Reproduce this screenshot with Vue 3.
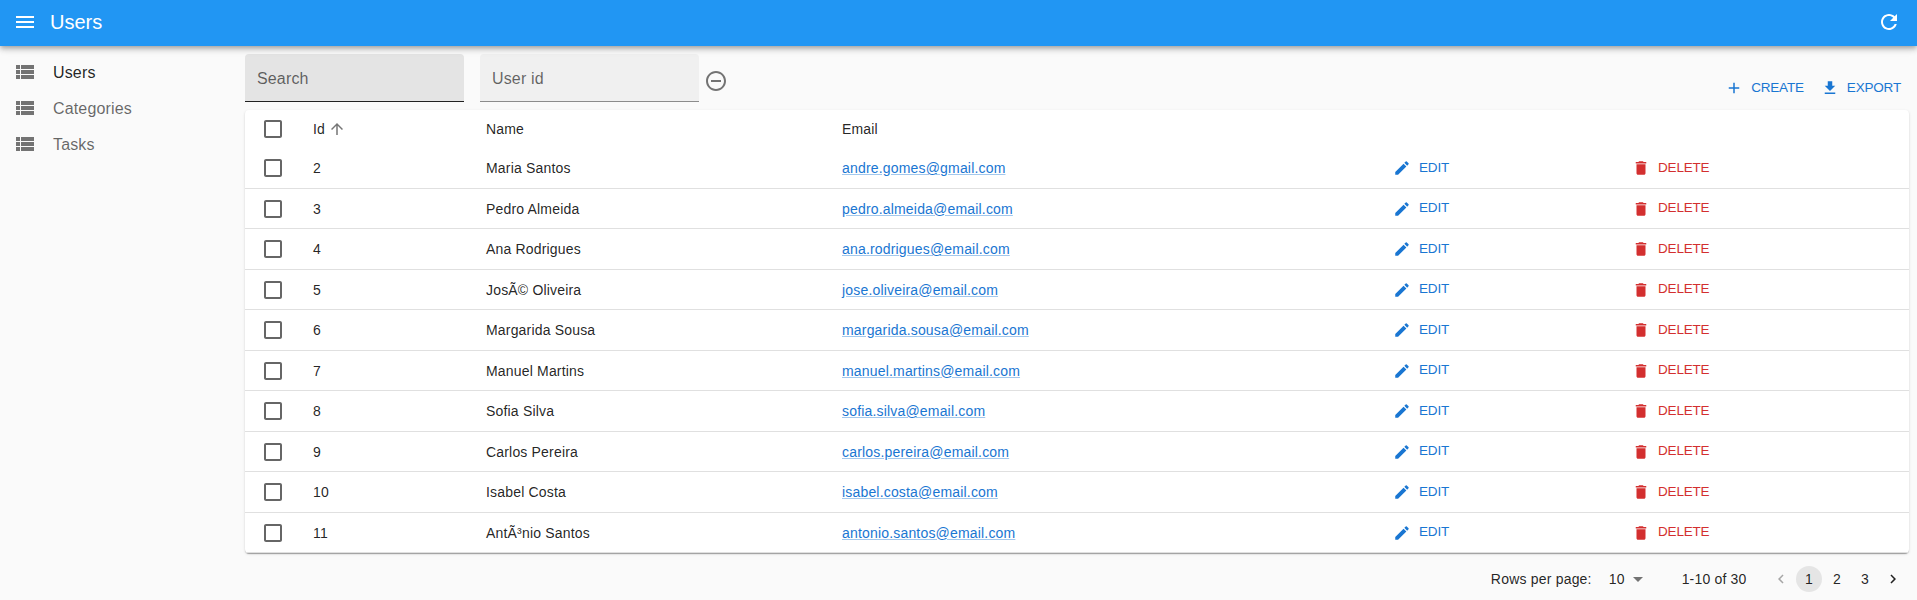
<script setup>
const menu = ['Users', 'Categories', 'Tasks']
const users = [
  { id: 2, name: 'Maria Santos', email: 'andre.gomes@gmail.com' },
  { id: 3, name: 'Pedro Almeida', email: 'pedro.almeida@email.com' },
  { id: 4, name: 'Ana Rodrigues', email: 'ana.rodrigues@email.com' },
  { id: 5, name: 'JosÃ© Oliveira', email: 'jose.oliveira@email.com' },
  { id: 6, name: 'Margarida Sousa', email: 'margarida.sousa@email.com' },
  { id: 7, name: 'Manuel Martins', email: 'manuel.martins@email.com' },
  { id: 8, name: 'Sofia Silva', email: 'sofia.silva@email.com' },
  { id: 9, name: 'Carlos Pereira', email: 'carlos.pereira@email.com' },
  { id: 10, name: 'Isabel Costa', email: 'isabel.costa@email.com' },
  { id: 11, name: 'AntÃ³nio Santos', email: 'antonio.santos@email.com' },
]
const icons = {
  menu: 'M3 18h18v-2H3v2zm0-5h18v-2H3v2zm0-7v2h18V6H3z',
  refresh: 'M17.65 6.35C16.2 4.9 14.21 4 12 4c-4.42 0-7.99 3.58-7.99 8s3.57 8 7.99 8c3.73 0 6.84-2.55 7.73-6h-2.08c-.82 2.33-3.04 4-5.65 4-3.31 0-6-2.69-6-6s2.69-6 6-6c1.66 0 3.14.69 4.22 1.78L13 11h7V4l-2.35 2.35z',
  list: 'M3 14h4v-4H3v4zm0 5h4v-4H3v4zM3 9h4V5H3v4zm5 5h13v-4H8v4zm0 5h13v-4H8v4zM8 5v4h13V5H8z',
  remove: 'M7 11v2h10v-2H7zm5-9C6.48 2 2 6.48 2 12s4.48 10 10 10 10-4.48 10-10S17.52 2 12 2zm0 18c-4.41 0-8-3.59-8-8s3.59-8 8-8 8 3.59 8 8-3.59 8-8 8z',
  add: 'M19 13h-6v6h-2v-6H5v-2h6V5h2v6h6v2z',
  download: 'M19 9h-4V3H9v6H5l7 7 7-7zM5 18v2h14v-2H5z',
  box: 'M19 5v14H5V5h14m0-2H5c-1.1 0-2 .9-2 2v14c0 1.1.9 2 2 2h14c1.1 0 2-.9 2-2V5c0-1.1-.9-2-2-2z',
  up: 'M4 12l1.41 1.41L11 7.83V20h2V7.83l5.58 5.59L20 12l-8-8-8 8z',
  edit: 'M3 17.25V21h3.75L17.81 9.94l-3.75-3.75L3 17.25zM20.71 7.04c.39-.39.39-1.02 0-1.41l-2.34-2.34a.9959.9959 0 0 0-1.41 0l-1.83 1.83 3.75 3.75 1.83-1.83z',
  del: 'M6 19c0 1.1.9 2 2 2h8c1.1 0 2-.9 2-2V7H6v12zM19 4h-3.5l-1-1h-5l-1 1H5v2h14V4z',
  drop: 'M7 10l5 5 5-5z',
  prev: 'M15.41 7.41L14 6l-6 6 6 6 1.41-1.41L10.83 12z',
  next: 'M10 6L8.59 7.41 13.17 12l-4.58 4.59L10 18l6-6z',
}
</script>

<template>
  <div class="app">
    <header class="bar">
      <svg class="i24" viewBox="0 0 24 24"><path :d="icons.menu" /></svg>
      <h1>Users</h1>
      <svg class="i24 refresh" viewBox="0 0 24 24"><path :d="icons.refresh" /></svg>
    </header>
    <div class="body">
      <nav class="side">
        <a v-for="(m, i) in menu" :key="m" class="item" :class="{ active: i === 0 }">
          <svg class="i24" viewBox="0 0 24 24"><path :d="icons.list" /></svg>
          <span>{{ m }}</span>
        </a>
      </nav>
      <main class="main">
        <div class="toolbar">
          <div class="field hover">Search</div>
          <div class="field">User id</div>
          <svg class="i24 remove" viewBox="0 0 24 24"><path :d="icons.remove" /></svg>
          <div class="actions">
            <a class="btn"><svg class="i18" viewBox="0 0 24 24"><path :d="icons.add" /></svg><span>CREATE</span></a>
            <a class="btn"><svg class="i18" viewBox="0 0 24 24"><path :d="icons.download" /></svg><span>EXPORT</span></a>
          </div>
        </div>
        <section class="card">
          <div class="row head">
            <svg class="i24 check" viewBox="0 0 24 24"><path :d="icons.box" /></svg>
            <span class="sorted">Id<svg class="i18 arrow" viewBox="0 0 24 24"><path :d="icons.up" /></svg></span>
            <span>Name</span>
            <span>Email</span>
          </div>
          <div v-for="u in users" :key="u.id" class="row">
            <svg class="i24 check" viewBox="0 0 24 24"><path :d="icons.box" /></svg>
            <span>{{ u.id }}</span>
            <span>{{ u.name }}</span>
            <span><a class="mail">{{ u.email }}</a></span>
            <a class="btn"><svg class="i18" viewBox="0 0 24 24"><path :d="icons.edit" /></svg><span>EDIT</span></a>
            <a class="btn danger"><svg class="i18" viewBox="0 0 24 24"><path :d="icons.del" /></svg><span>DELETE</span></a>
          </div>
        </section>
        <footer class="pager">
          <span class="label">Rows per page:</span>
          <span class="size">10</span>
          <svg class="i24 drop" viewBox="0 0 24 24"><path :d="icons.drop" /></svg>
          <span class="range">1-10 of 30</span>
          <span class="page off"><svg class="i18" viewBox="0 0 24 24"><path :d="icons.prev" /></svg></span>
          <span class="page current">1</span>
          <span class="page">2</span>
          <span class="page">3</span>
          <span class="page"><svg class="i18" viewBox="0 0 24 24"><path :d="icons.next" /></svg></span>
        </footer>
      </main>
    </div>
  </div>
</template>

<style>
body {
  background: #fafafa;
  overflow: hidden;
}
</style>

<style scoped>
.app {
  height: 600px;
  overflow: hidden;
  background: #fafafa;
  color: rgba(0, 0, 0, 0.87);
  font: 14px/20px "Liberation Sans", Arial, sans-serif;
  letter-spacing: 0.18px;
}
svg {
  display: block;
  flex: none;
  fill: currentColor;
}
.i24 { width: 24px; height: 24px; }
.i18 { width: 18px; height: 18px; }
.bar {
  position: relative;
  box-sizing: border-box;
  height: 46px;
  padding: 0 16px 2px 13px;
  display: flex;
  align-items: center;
  background: #2196f3;
  color: #fff;
  box-shadow: 0 2px 4px -1px rgba(0, 0, 0, 0.2), 0 4px 5px rgba(0, 0, 0, 0.14), 0 1px 10px rgba(0, 0, 0, 0.12);
}
h1 {
  flex: 1;
  margin: 0 0 0 13px;
  font-size: 20px;
  line-height: 32px;
  font-weight: 400;
  letter-spacing: 0;
}
.body { display: flex; }
.side {
  width: 245px;
  flex: none;
  padding-top: 8px;
}
.item {
  display: flex;
  align-items: center;
  height: 36px;
  padding-left: 13px;
  font-size: 16px;
  letter-spacing: 0.15px;
  color: rgba(0, 0, 0, 0.6);
}
.item span { margin: 2px 0 0 16px; }
.item svg { color: rgba(0, 0, 0, 0.54); }
.item.active { color: rgba(0, 0, 0, 0.87); }
.main {
  width: 1664px;
  flex: none;
}
.toolbar {
  display: flex;
  height: 56px;
  padding-top: 8px;
}
.field {
  box-sizing: border-box;
  width: 219px;
  height: 48px;
  margin-right: 16px;
  padding: 0 12px;
  font-size: 16px;
  line-height: 50px;
  letter-spacing: 0.15px;
  color: rgba(0, 0, 0, 0.6);
  background: #f0f0f0;
  border-bottom: 1px solid #8c8c8c;
  border-radius: 4px 4px 0 0;
}
.field.hover {
  background: #e4e4e4;
  border-bottom-color: #212121;
}
.remove {
  margin: 15px 0 0 -11px;
  color: rgba(0, 0, 0, 0.54);
}
.actions {
  display: flex;
  align-items: center;
  gap: 17px;
  height: 30px;
  margin: 19px 8px 0 auto;
}
.btn {
  display: flex;
  align-items: center;
  gap: 8px;
  font-size: 13.5px;
  letter-spacing: -0.18px;
  color: #1976d2;
}
.btn span { margin-bottom: 0.6px; }
.danger { color: #d32f2f; }
.card {
  box-sizing: border-box;
  height: 443px;
  background: #fff;
  border-radius: 4px;
  box-shadow: 0 2px 1px -1px rgba(0, 0, 0, 0.2), 0 1px 1px rgba(0, 0, 0, 0.14), 0 1px 3px rgba(0, 0, 0, 0.12);
}
.row {
  box-sizing: border-box;
  height: 40.5px;
  display: grid;
  grid-template-columns: 52px 173px 356px 551px 239px 1fr;
  align-items: center;
  padding: 0.6px 0 0 16px;
  border-bottom: 1px solid #e0e0e0;
}
.row.head {
  height: 38px;
  padding-top: 0;
  border: 0;
}
.check { color: rgba(0, 0, 0, 0.6); }
.sorted {
  display: flex;
  align-items: center;
}
.arrow {
  margin-left: 3px;
  color: rgba(0, 0, 0, 0.54);
}
.mail {
  color: #1976d2;
  text-decoration: underline;
  text-decoration-color: rgba(25, 118, 210, 0.4);
}
.pager {
  display: flex;
  align-items: center;
  justify-content: flex-end;
  height: 52px;
  padding-right: 2px;
}
.label { letter-spacing: 0.2px; }
.size { margin-left: 17px; }
.drop {
  margin-left: 1px;
  color: rgba(0, 0, 0, 0.54);
}
.range { margin: 0 20.5px 0 32px; }
.page {
  width: 26px;
  height: 26px;
  margin: 0 1px;
  border-radius: 13px;
  display: flex;
  align-items: center;
  justify-content: center;
}
.off { opacity: 0.38; }
.current { background: #e5e5e5; }
</style>
